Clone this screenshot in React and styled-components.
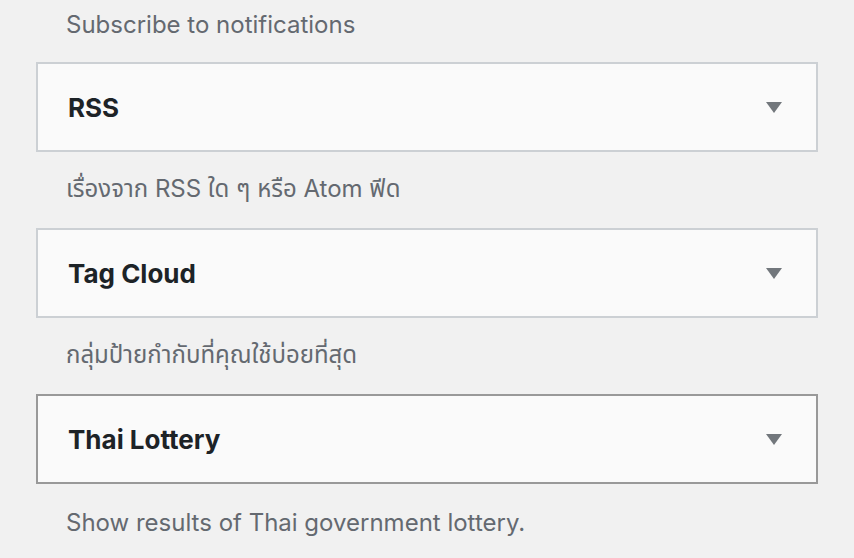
import React from 'react';
import styled, { createGlobalStyle } from 'styled-components';

const GlobalStyle = createGlobalStyle`
  html, body {
    margin: 0;
    padding: 0;
    background: #f1f1f1;
  }
  body {
    font-family: Inter, "Noto Sans", "Liberation Sans", sans-serif;
  }
`;

const widgets = [
  { title: 'RSS', desc: 'เรื่องจาก RSS ใด ๆ หรือ Atom ฟีด' },
  { title: 'Tag Cloud', desc: 'กลุ่มป้ายกำกับที่คุณใช้บ่อยที่สุด' },
  { title: 'Thai Lottery', desc: 'Show results of Thai government lottery.', active: true },
];

function App() {
  return (
    <>
      <GlobalStyle />
      <List>
        <Description $first>Subscribe to notifications</Description>
        {widgets.map((w) => (
          <React.Fragment key={w.title}>
            <WidgetBox $active={w.active}>
              <Title>{w.title}</Title>
              <Arrow />
            </WidgetBox>
            <Description>{w.desc}</Description>
          </React.Fragment>
        ))}
      </List>
    </>
  );
}

export default App;

const List = styled.div`
  width: 782px;
  padding-left: 36px;
  display: flex;
  flex-direction: column;
`;

const Description = styled.p`
  margin: 0;
  height: ${(p) => (p.$first ? '48px' : '76px')};
  margin-bottom: ${(p) => (p.$first ? '14px' : '0')};
  display: flex;
  align-items: center;
  padding-left: 30px;
  font-size: 24px;
  color: #646970;
  font-family: Inter, "Noto Sans", "Noto Sans Thai", "Liberation Sans", sans-serif;
`;

const WidgetBox = styled.div`
  box-sizing: border-box;
  height: 90px;
  background: #fafafa;
  border: 2px solid ${(p) => (p.$active ? '#999999' : '#ccd0d4')};
  display: flex;
  align-items: center;
  justify-content: space-between;
  padding: 0 34px 0 30px;
`;

const Title = styled.h3`
  margin: 0;
  font-size: 26px;
  font-weight: 700;
  color: #1d2327;
`;

const Arrow = styled.span`
  width: 0;
  height: 0;
  border-left: 8px solid transparent;
  border-right: 8px solid transparent;
  border-top: 11px solid #72777c;
`;
